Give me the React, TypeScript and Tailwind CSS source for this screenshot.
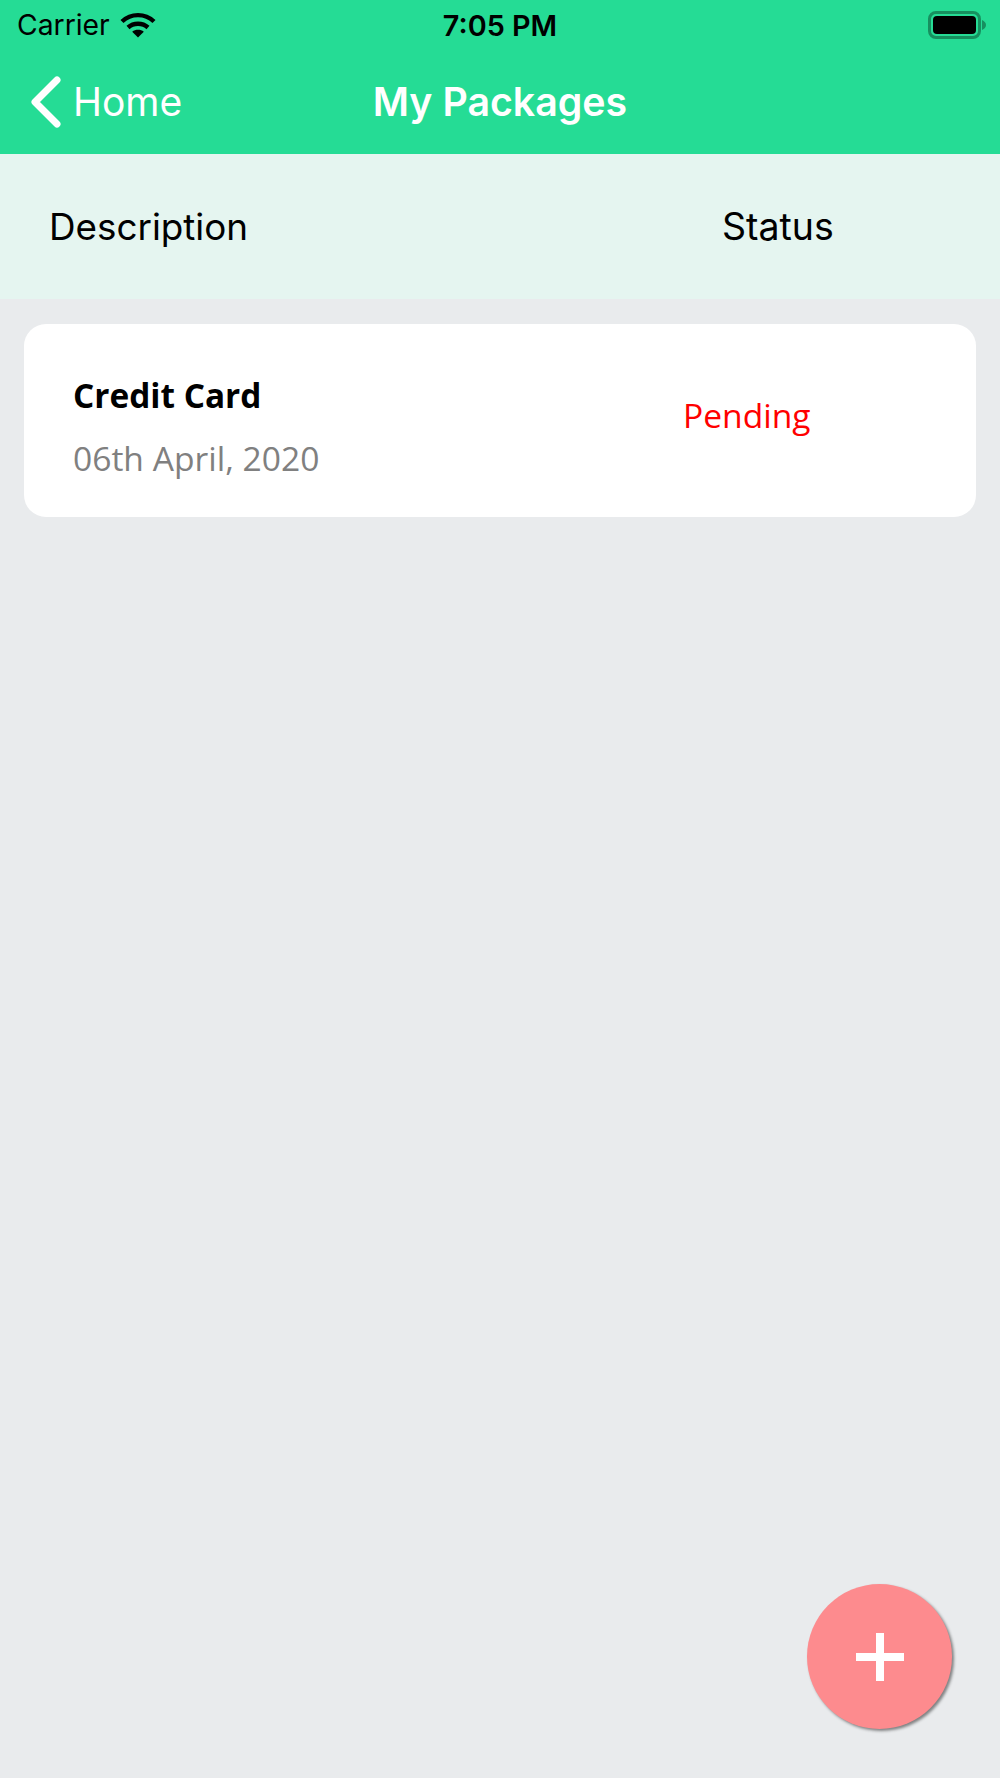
const App = () => {
  return (
    <div className="relative flex h-[1778px] w-full flex-col overflow-hidden bg-[#e9ebed] font-['Inter',sans-serif]">
      <header className="h-[154px] shrink-0 bg-[#25dc95]">
        <div className="grid h-[50px] grid-cols-3 items-center text-black">
          <div className="flex items-center pl-[17px]">
            <span className="text-[28.3px] leading-none">Carrier</span>
            <svg className="ml-[10px] h-[26px] w-[36px]" viewBox="0 0 36 26" fill="none" stroke="currentColor" strokeWidth="4.4">
              <path d="M2 9.5C11 1 25 1 34 9.5" />
              <path d="M8 15.5C13.5 10.5 22.5 10.5 28 15.5" />
              <path d="M18 25.5L12.2 19.8C15.5 17.2 20.5 17.2 23.8 19.8Z" fill="currentColor" stroke="none" />
            </svg>
          </div>
          <div className="pt-[2px] text-center text-[28.8px] leading-none font-semibold">7:05 PM</div>
          <div className="flex items-center justify-end pr-[14px]">
            <div className="flex h-[28px] w-[53px] items-center justify-center rounded-[8px] border-[3px] border-[#17905f]">
              <div className="h-[18px] w-[43px] rounded-[4px] bg-black" />
            </div>
            <svg className="ml-[1px] h-[10px] w-[4px]" viewBox="0 0 4 10">
              <path d="M0 0C2.5 1 4 3 4 5C4 7 2.5 9 0 10Z" fill="#17905f" />
            </svg>
          </div>
        </div>
        <div className="relative flex h-[104px] items-center justify-center">
          <div className="absolute left-[31px] top-[26px] flex items-center text-white">
            <svg className="h-[52px] w-[30px]" viewBox="0 0 30 52" fill="none" stroke="currentColor" strokeWidth="7" strokeLinecap="round" strokeLinejoin="round">
              <path d="M26 4L4 26L26 48" />
            </svg>
            <span className="ml-[12px] pb-[2px] text-[39px] leading-none">Home</span>
          </div>
          <h1 className="text-[39.3px] leading-none font-semibold text-white">My Packages</h1>
        </div>
      </header>

      <div className="flex h-[145px] shrink-0 items-center bg-[#e5f5f0] text-[36.8px] text-black">
        <div className="w-[722px] pl-[49px]">Description</div>
        <div className="pt-[2px] text-[37.5px]">Status</div>
      </div>

      <main className="px-[24px] pt-[25px]">
        <div className="flex h-[193px] items-center rounded-[22px] bg-white pl-[49px] font-['Open_Sans',sans-serif]">
          <div className="w-[610px] pt-[11px]">
            <div className="text-[33.4px] leading-[44px] font-bold text-black">Credit Card</div>
            <div className="mt-[19px] text-[33.6px] leading-[44px] text-[#808080]">06th April, 2020</div>
          </div>
          <div className="pb-[10px] text-[33.6px] text-[#ff0000]">Pending</div>
        </div>
      </main>

      <button className="absolute left-[807px] top-[1584px] flex h-[145px] w-[145px] items-center justify-center rounded-full bg-[#fd8b8e] shadow-[2px_2px_3px_rgba(0,0,0,0.45)]">
        <svg className="h-[48px] w-[48px]" viewBox="0 0 48 48" fill="#fff">
          <path d="M20 0H28V20H48V28H28V48H20V28H0V20H20Z" />
        </svg>
      </button>
    </div>
  );
};

export default App;
